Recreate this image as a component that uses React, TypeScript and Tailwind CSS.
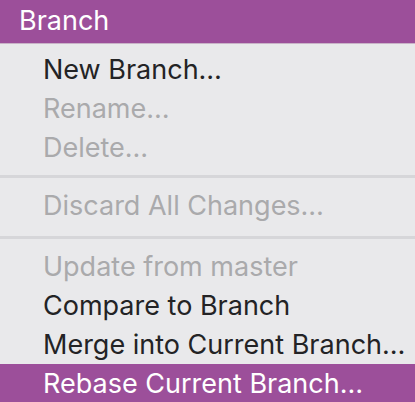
function Item({ label, disabled, active }: { label: string; disabled?: boolean; active?: boolean }) {
  return (
    <div
      className={
        "h-[39px] leading-[39px] pl-[43px] whitespace-nowrap " +
        (active ? "bg-[#9c4f9a] text-white" : disabled ? "text-[#aaaaac]" : "text-[#232325]")
      }
    >
      {label}
    </div>
  );
}

function Separator({ top }: { top: string }) {
  return (
    <div className={top + " pb-[8px]"}>
      <div className="h-[3px] bg-[#d6d6d9]" />
    </div>
  );
}

export default function App() {
  return (
    <div
      className="w-[415px] h-[402px] overflow-hidden bg-[#e9e9eb] text-[27px]"
      style={{ fontFamily: "Inter, 'Noto Sans', sans-serif" }}
    >
      <div className="h-[44px] bg-[#9c4f9a] border-b border-[#c9b3c8] text-white pl-[19px] leading-[41px]">
        Branch
      </div>
      <div className="pt-[6px]">
        <Item label="New Branch…" />
        <Item label="Rename…" disabled />
        <Item label="Delete…" disabled />
        <Separator top="pt-[8px]" />
        <Item label="Discard All Changes…" disabled />
        <Separator top="pt-[11px]" />
        <Item label="Update from master" disabled />
        <Item label="Compare to Branch" />
        <Item label="Merge into Current Branch…" />
        <Item label="Rebase Current Branch…" active />
      </div>
    </div>
  );
}
